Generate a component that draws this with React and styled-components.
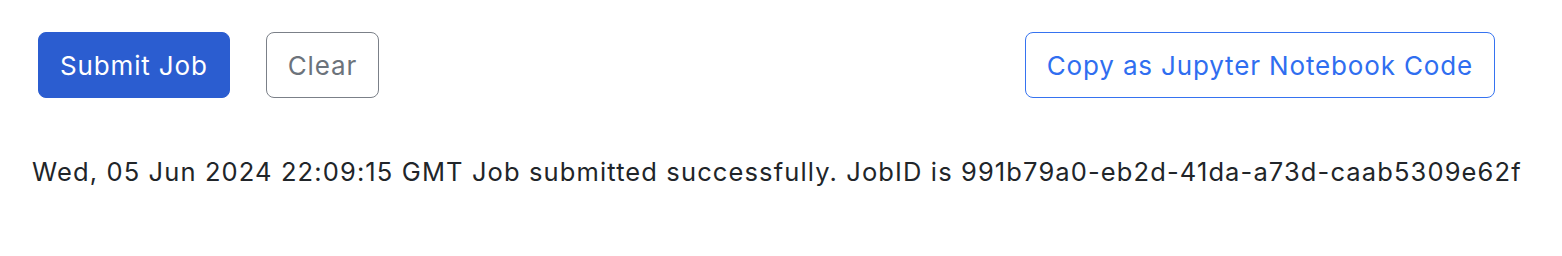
import React from 'react'
import styled, { createGlobalStyle } from 'styled-components'

const GlobalStyle = createGlobalStyle`
  html, body {
    margin: 0;
    padding: 0;
    background: #ffffff;
    font-family: Inter, "Noto Sans", "Liberation Sans", sans-serif;
  }
`

const Page = styled.div`
  width: 1562px;
  height: 256px;
  box-sizing: border-box;
  padding: 32px 67px 0 38px;
`

const Toolbar = styled.div`
  display: flex;
  align-items: center;
  justify-content: space-between;
`

const Group = styled.div`
  display: flex;
  gap: 36px;
`

const variants = {
  primary: `
    background: #2b5dd0;
    border-color: #2b5dd0;
    color: #ffffff;
  `,
  secondary: `
    background: #ffffff;
    border-color: #7b8088;
    color: #6c737b;
  `,
  outline: `
    background: #ffffff;
    border-color: #3673f0;
    color: #2f6ef0;
  `,
}

const Button = styled.button`
  height: 66px;
  box-sizing: border-box;
  padding: 0 21px;
  border: 1px solid;
  border-radius: 8px;
  font-family: inherit;
  font-size: 26px;
  font-weight: 400;
  letter-spacing: 0.85px;
  cursor: pointer;
  ${(p) => variants[p.$variant]}
`

const Status = styled.p`
  margin: 55px 0 0 -6px;
  font-size: 25.5px;
  letter-spacing: 1.12px;
  white-space: nowrap;
  color: #212529;
  line-height: 1.5;
`

export default function App() {
  return (
    <>
      <GlobalStyle />
      <Page>
        <Toolbar>
          <Group>
            <Button $variant="primary">Submit Job</Button>
            <Button $variant="secondary">Clear</Button>
          </Group>
          <Button $variant="outline">Copy as Jupyter Notebook Code</Button>
        </Toolbar>
        <Status>
          Wed, 05 Jun 2024 22:09:15 GMT Job submitted successfully. JobID is 991b79a0-eb2d-41da-a73d-caab5309e62f
        </Status>
      </Page>
    </>
  )
}
